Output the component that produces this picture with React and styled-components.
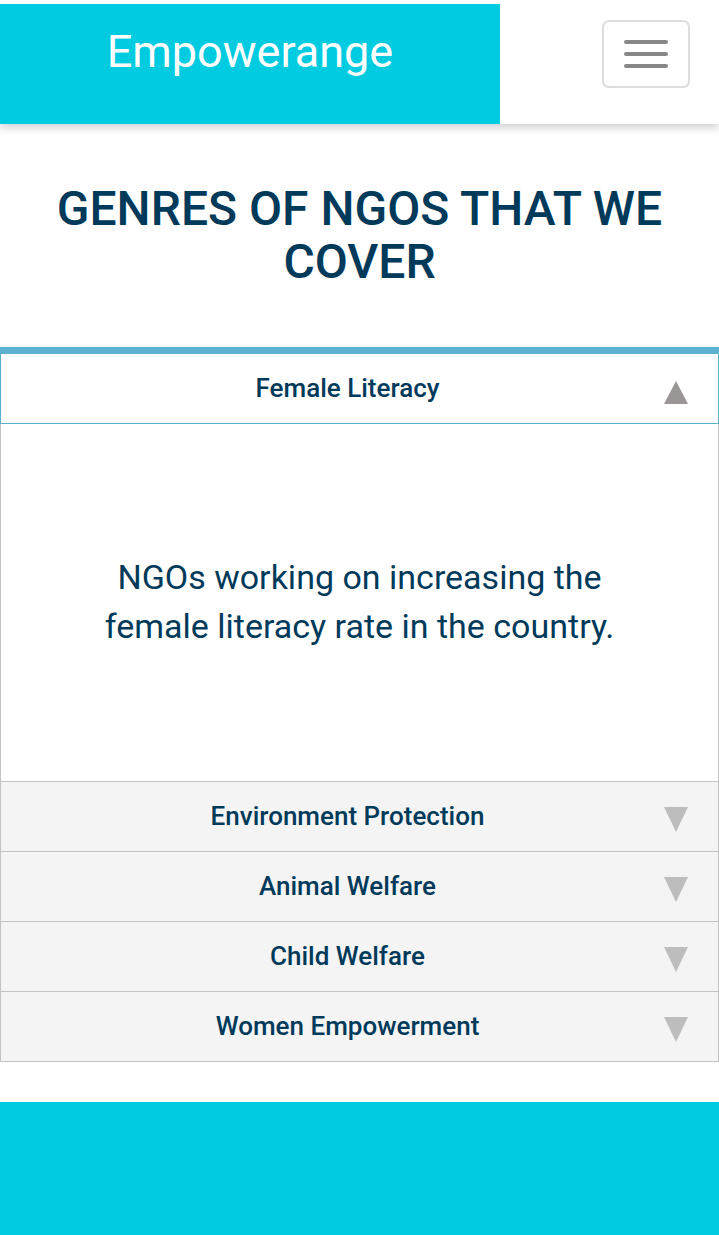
import React, { useState } from 'react'
import styled, { createGlobalStyle } from 'styled-components'

const GlobalStyle = createGlobalStyle`
    body {
        margin: 0;
        background: #ffffff;
        font-family: Roboto, "Noto Sans", sans-serif;
    }
`

const genres = [
    { title: 'Female Literacy', text: 'NGOs working on increasing the female literacy rate in the country.' },
    { title: 'Environment Protection', text: 'NGOs working on protecting the environment.' },
    { title: 'Animal Welfare', text: 'NGOs working for the welfare of animals.' },
    { title: 'Child Welfare', text: 'NGOs working for the welfare of children.' },
    { title: 'Women Empowerment', text: 'NGOs working on empowering women.' },
]

export default function App() {
    const [open, setOpen] = useState(0)

    return (
        <Page>
            <GlobalStyle />
            <Header>
                <Brand>Empowerange</Brand>
                <Toggle aria-label="menu">
                    <Bar />
                    <Bar />
                    <Bar />
                </Toggle>
            </Header>

            <Title>GENRES OF NGOS THAT WE COVER</Title>

            <Accordion>
                {genres.map((g, i) => (
                    <Item key={g.title}>
                        <ItemHead $open={open === i} onClick={() => setOpen(open === i ? -1 : i)}>
                            {g.title}
                            <Arrow $open={open === i} />
                        </ItemHead>
                        {open === i && <ItemBody>{g.text}</ItemBody>}
                    </Item>
                ))}
            </Accordion>

            <Footer />
        </Page>
    )
}

const Page = styled.div`
    min-height: 1235px;
    display: flex;
    flex-direction: column;
`

const Header = styled.header`
    display: flex;
    align-items: flex-start;
    justify-content: space-between;
    padding-top: 4px;
    background: #ffffff;
    box-shadow: 0 4px 8px rgba(0, 0, 0, 0.18);
    position: relative;
    z-index: 1;
`

const Brand = styled.div`
    width: 500px;
    height: 120px;
    box-sizing: border-box;
    padding-top: 24px;
    background: #00cbe0;
    color: #ffffff;
    font-size: 45px;
    line-height: 48px;
    text-align: center;
`

const Toggle = styled.button`
    width: 88px;
    height: 68px;
    margin: 16px 29px 0 0;
    padding: 0;
    box-sizing: border-box;
    border: 2px solid #dddddd;
    border-radius: 7px;
    background: #ffffff;
    display: flex;
    flex-direction: column;
    align-items: center;
    justify-content: center;
    gap: 8px;
`

const Bar = styled.span`
    display: block;
    width: 44px;
    height: 4px;
    border-radius: 2px;
    background: #888888;
`

const Title = styled.h1`
    margin: 58px 30px 59px;
    color: #003a5a;
    font-size: 48px;
    font-weight: 500;
    line-height: 53px;
    text-align: center;
`

const Accordion = styled.section`
    border-top: 7px solid #5bb0d0;
`

const Item = styled.div``

const ItemHead = styled.div`
    position: relative;
    height: ${p => (p.$open ? '70px' : '71px')};
    box-sizing: border-box;
    border: 1px solid ${p => (p.$open ? '#5bb0d0' : '#c3c3c3')};
    border-top-width: ${p => (p.$open ? '0' : '1px')};
    margin-top: ${p => (p.$open ? '0' : '-1px')};
    background: ${p => (p.$open ? '#ffffff' : '#f4f4f4')};
    color: #003a5a;
    font-size: 26px;
    font-weight: 500;
    line-height: 68px;
    text-align: center;
    padding-right: 24px;
    cursor: pointer;
`

const Arrow = styled.span`
    position: absolute;
    right: 30px;
    top: ${p => (p.$open ? '27px' : '25px')};
    width: 0;
    height: 0;
    border-left: 12px solid transparent;
    border-right: 12px solid transparent;
    ${p =>
        p.$open
            ? 'border-bottom: 23px solid #9a9696;'
            : 'border-top: 25px solid #bdbdbd;'}
`

const ItemBody = styled.div`
    height: 358px;
    box-sizing: border-box;
    border-left: 1px solid #c3c3c3;
    border-right: 1px solid #c3c3c3;
    display: flex;
    align-items: center;
    justify-content: center;
    padding: 0 100px 2px;
    color: #003a5a;
    font-size: 34px;
    line-height: 49px;
    text-align: center;
`

const Footer = styled.footer`
    margin-top: 40px;
    flex: 1;
    background: #00cbe0;
`
